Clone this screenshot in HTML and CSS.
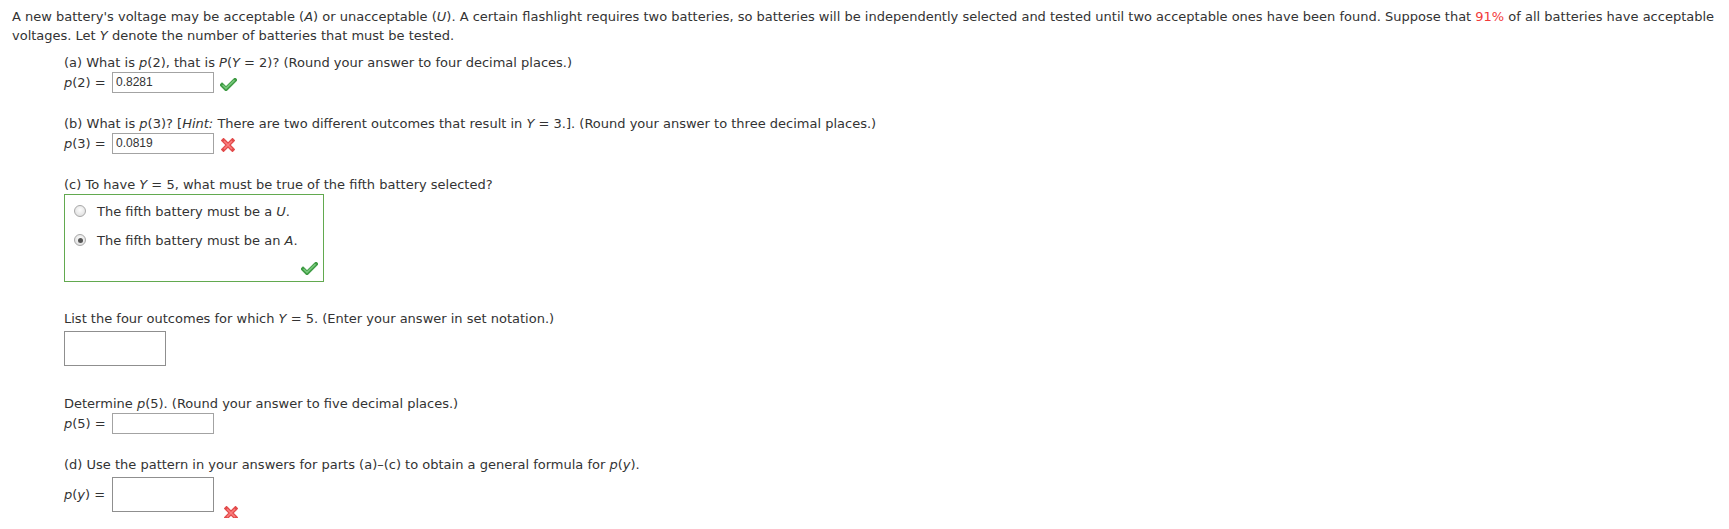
FILE: index.html
```html
<!DOCTYPE html>
<html>
<head>
<meta charset="utf-8">
<link rel="stylesheet" href="styles.css">
</head>
<body>
<div class="page">
  <p class="intro">A new battery's voltage may be acceptable (<i>A</i>) or unacceptable (<i>U</i>). A certain flashlight requires two batteries, so batteries will be independently selected and tested until two acceptable ones have been found. Suppose that <span class="red">91%</span> of all batteries have acceptable voltages. Let <i>Y</i> denote the number of batteries that must be tested.</p>

  <div class="parts">
    <div class="q">(a) What is <i>p</i>(2), that is <i>P</i>(<i>Y</i> = 2)? (Round your answer to four decimal places.)</div>
    <div class="row">
      <span class="lbl"><i>p</i>(2) =</span>
      <span class="field">0.8281</span>
      <svg class="icon check" width="17" height="13" viewBox="0 0 17 13"><polyline points="2,7 6,11 15,2" fill="none" stroke="#3f9b44" stroke-width="4" stroke-linecap="square"/><polyline points="2.5,7 6,10.3 14.5,2.2" fill="none" stroke="#76c77a" stroke-width="1.6"/></svg>
    </div>

    <div class="q gap">(b) What is <i>p</i>(3)? [<i>Hint:</i> There are two different outcomes that result in <i>Y</i> = 3.]. (Round your answer to three decimal places.)</div>
    <div class="row">
      <span class="lbl"><i>p</i>(3) =</span>
      <span class="field">0.0819</span>
      <svg class="icon cross" width="14" height="14" viewBox="0 0 14 14"><path d="M2.5 2.5 L11.5 11.5 M11.5 2.5 L2.5 11.5" stroke="#e24b4b" stroke-width="4" stroke-linecap="square"/><path d="M3 3 L11 11 M11 3 L3 11" stroke="#fb7d7d" stroke-width="1.6"/></svg>
    </div>

    <div class="q gap">(c) To have <i>Y</i> = 5, what must be true of the fifth battery selected?</div>
    <div class="choices">
      <div class="opt"><span class="radio"></span><span>The fifth battery must be a <i>U</i>.</span></div>
      <div class="opt"><span class="radio on"></span><span>The fifth battery must be an <i>A</i>.</span></div>
      <div class="choice-foot">
        <svg class="icon" width="17" height="13" viewBox="0 0 17 13"><polyline points="2,7 6,11 15,2" fill="none" stroke="#3f9b44" stroke-width="4" stroke-linecap="square"/><polyline points="2.5,7 6,10.3 14.5,2.2" fill="none" stroke="#76c77a" stroke-width="1.6"/></svg>
      </div>
    </div>

    <div class="q gap2">List the four outcomes for which <i>Y</i> = 5. (Enter your answer in set notation.)</div>
    <div class="bigfield first"></div>

    <div class="q gap3">Determine <i>p</i>(5). (Round your answer to five decimal places.)</div>
    <div class="row">
      <span class="lbl"><i>p</i>(5) =</span>
      <span class="field"></span>
    </div>

    <div class="q gap">(d) Use the pattern in your answers for parts (a)–(c) to obtain a general formula for <i>p</i>(<i>y</i>).</div>
    <div class="row-tall">
      <span class="lbl tall-lbl"><i>p</i>(<i>y</i>) =</span>
      <span class="bigfield"></span>
      <svg class="icon cross-low" width="14" height="14" viewBox="0 0 14 14"><path d="M2.5 2.5 L11.5 11.5 M11.5 2.5 L2.5 11.5" stroke="#e24b4b" stroke-width="4" stroke-linecap="square"/><path d="M3 3 L11 11 M11 3 L3 11" stroke="#fb7d7d" stroke-width="1.6"/></svg>
    </div>
  </div>
</div>
</body>
</html>
```

FILE: styles.css
```css
html, body {
  margin: 0;
  padding: 0;
  background: #fff;
}
.page {
  padding: 7px 8px 0 12px;
  font-family: "DejaVu Sans", Verdana, sans-serif;
  font-size: 13px;
  line-height: 19px;
  color: #333;
}
.intro {
  margin: 0;
}
.red {
  color: #f23a3a;
}
.parts {
  padding-left: 52px;
  margin-top: 8px;
}
.q {
  white-space: nowrap;
}
.gap {
  margin-top: 21px;
}
.gap2 {
  margin-top: 27px;
}
.gap3 {
  margin-top: 28px;
}
.row {
  display: flex;
  align-items: center;
  height: 21px;
}
.row-tall {
  display: flex;
  align-items: flex-start;
  height: 41px;
  margin-top: 3px;
}
.lbl {
  width: 48px;
  flex: none;
}
.tall-lbl {
  line-height: 35px;
}
.field {
  box-sizing: border-box;
  width: 102px;
  height: 21px;
  border: 1px solid #a3a3a3;
  font-family: "Liberation Sans", Arial, sans-serif;
  font-size: 12px;
  line-height: 19px;
  padding-left: 3px;
  color: #333;
}
.bigfield {
  display: block;
  box-sizing: border-box;
  width: 102px;
  height: 35px;
  border: 1px solid #8f8f8f;
  flex: none;
}
.bigfield.first {
  margin-top: 3px;
}
.icon {
  display: block;
  flex: none;
}
.row .icon {
  margin-left: 6px;
  align-self: flex-end;
  margin-bottom: 2px;
}
.row .cross {
  margin-left: 7px;
}
.cross-low {
  margin-left: 10px;
  margin-top: 29px;
}
.choices {
  box-sizing: border-box;
  width: 260px;
  height: 88px;
  border: 1px solid #62a94f;
  padding: 7px 0 0 9px;
  position: relative;
}
.opt {
  display: flex;
  align-items: center;
  height: 19px;
  margin-bottom: 10px;
}
.radio {
  box-sizing: border-box;
  width: 12px;
  height: 12px;
  border-radius: 50%;
  border: 1px solid #a8a8a8;
  background: radial-gradient(circle at 50% 40%, #fdfdfd 0%, #e4e4e4 70%, #d6d6d6 100%);
  margin-right: 11px;
  margin-top: -1px;
  flex: none;
  display: flex;
  align-items: center;
  justify-content: center;
}
.radio.on::after {
  content: "";
  width: 5px;
  height: 5px;
  border-radius: 50%;
  background: #555;
}
.choice-foot {
  position: absolute;
  right: 5px;
  bottom: 6px;
}
```
